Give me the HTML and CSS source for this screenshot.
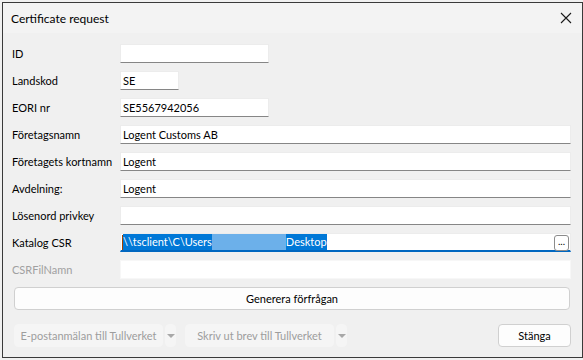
FILE: index.html
```html
<!DOCTYPE html>
<html lang="sv">
<head>
    <meta charset="UTF-8">
    <title>Certificate request</title>
    <link rel="stylesheet" href="styles.css">
</head>
<body>
    <div class="window">
        <div class="titlebar">
            <span class="title">Certificate request</span>
            <svg class="close" viewBox="0 0 12 12" width="12" height="12">
                <path d="M1 1L11 11M11 1L1 11" stroke="#1a1a1a" stroke-width="1.1" fill="none"/>
            </svg>
        </div>

        <div class="content">
            <div class="form">
                <label>ID</label>
                <div class="field short"></div>

                <label>Landskod</label>
                <div class="field tiny">SE</div>

                <label>EORI nr</label>
                <div class="field short">SE5567942056</div>

                <label>Företagsnamn</label>
                <div class="field">Logent Customs AB</div>

                <label>Företagets kortnamn</label>
                <div class="field">Logent</div>

                <label>Avdelning:</label>
                <div class="field">Logent</div>

                <label>Lösenord privkey</label>
                <div class="field"></div>

                <label>Katalog CSR</label>
                <div class="field focused">
                    <span class="caret"></span><span class="sel">\\tsclient\C\Users</span><span class="redacted"></span><span class="sel">Desktop</span>
                    <span class="browse">...</span>
                </div>

                <label class="disabled">CSRFilNamn</label>
                <div class="field inactive"></div>
            </div>

            <button class="btn wide">Generera förfrågan</button>

            <div class="actions">
                <div class="split">
                    <button class="btn off mail">E-postanmälan till Tullverket</button>
                    <button class="btn off drop"><span class="tri"></span></button>
                </div>
                <div class="split">
                    <button class="btn off letter">Skriv ut brev till Tullverket</button>
                    <button class="btn off drop"><span class="tri"></span></button>
                </div>
                <button class="btn close-btn">Stänga</button>
            </div>
        </div>
    </div>
</body>
</html>
```

FILE: styles.css
```css
* {
    margin: 0;
    padding: 0;
    box-sizing: border-box;
}

body {
    background: #f0f0f0;
    font-family: 'Lato', 'Noto Sans', sans-serif;
    font-size: 11px;
    color: #000;
    width: 583px;
    height: 360px;
    overflow: hidden;
}

.window {
    margin: 2px 0 0 2px;
    width: 581px;
    height: 356px;
    border: 1px solid #3a3a3a;
    background: #f0f0f0;
}

.titlebar {
    height: 30px;
    background: #f3f3f3;
    display: flex;
    align-items: center;
    justify-content: space-between;
    padding: 0 10px 0 8px;
}

.title {
    font-size: 12px;
}

.close {
    display: block;
}

.content {
    padding: 11px 11px 0 9px;
}

.form {
    display: grid;
    grid-template-columns: 108px 1fr;
    row-gap: 8px;
    align-items: center;
}

label {
    white-space: nowrap;
    line-height: 19px;
}

label.disabled {
    color: #a0a0a0;
}

.field {
    height: 19px;
    background: #fff;
    border: 1px solid #ececec;
    border-bottom: 1px solid #868686;
    padding: 0 2px;
    line-height: 17px;
    display: flex;
    align-items: center;
    white-space: nowrap;
}

.short {
    width: 149px;
}

.tiny {
    width: 59px;
}

.field.focused {
    border-bottom: 2px solid #0067c0;
    padding-left: 1px;
    position: relative;
}

.field.inactive {
    border-color: #f7f7f7;
}

.caret {
    width: 1px;
    height: 15px;
    background: #a04000;
}

.sel {
    background: #0078d7;
    color: #fff;
    line-height: 16px;
}

.redacted {
    width: 74px;
    height: 16px;
    background: #6cb0ea;
}

.browse {
    position: absolute;
    right: 1px;
    top: 1px;
    width: 15px;
    height: 16px;
    border: 1px solid #8c8c8c;
    border-radius: 3px;
    background: #fff;
    font-size: 10px;
    line-height: 10px;
    text-align: center;
}

.btn {
    font-family: inherit;
    font-size: 11px;
    background: #fdfdfd;
    border: 1px solid #d0d0d0;
    border-radius: 4px;
    height: 23px;
    color: #000;
    white-space: nowrap;
}

.wide {
    display: block;
    width: 556px;
    margin: 8px 0 0 2px;
}

.actions {
    display: flex;
    align-items: center;
    margin: 14px 0 0 2px;
}

.split {
    display: flex;
    gap: 2px;
    margin-right: 9px;
}

.btn.off {
    background: #f5f5f5;
    border-color: #f5f5f5;
    color: #9d9d9d;
}

.mail {
    width: 149px;
}

.letter {
    width: 149px;
}

.drop {
    width: 11px;
    display: flex;
    align-items: center;
    justify-content: center;
}

.tri {
    width: 0;
    height: 0;
    border-left: 4px solid transparent;
    border-right: 4px solid transparent;
    border-top: 4px solid #a8a8a8;
}

.close-btn {
    width: 73px;
    margin-left: auto;
}
```
